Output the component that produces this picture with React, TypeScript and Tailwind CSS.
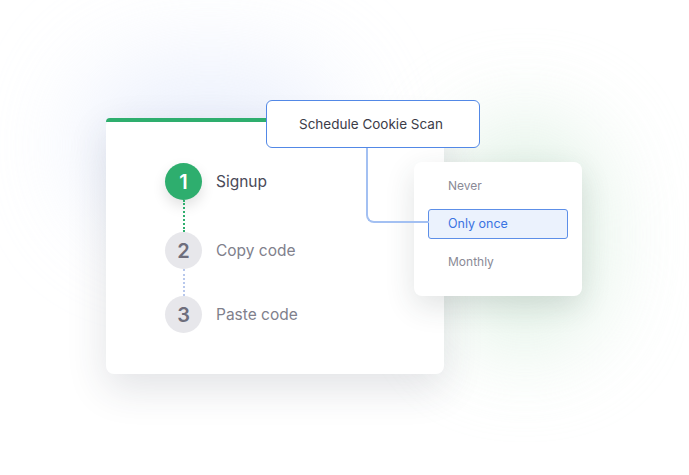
import React from "react";

const font = { fontFamily: "Inter, 'Noto Sans', sans-serif" };

function Step({ n, label, active }: { n: number; label: string; active?: boolean }) {
  return (
    <div className="flex items-center h-[37px]">
      <div
        className={
          active
            ? "w-[37px] h-[37px] rounded-full bg-[#2eae6e] text-white flex items-center justify-center text-[20px] font-semibold shadow-[0_6px_14px_rgba(0,0,0,0.12)]"
            : "w-[37px] h-[37px] rounded-full bg-[#e7e7eb] text-[#6e6e7c] flex items-center justify-center text-[20px] font-semibold"
        }
      >
        {n}
      </div>
      <span className={active ? "ml-[14px] text-[15.5px] text-[#4a4a58]" : "ml-[14px] text-[15.5px] text-[#80808c]"}>
        {label}
      </span>
    </div>
  );
}

export default function App() {
  return (
    <div className="relative w-[689px] h-[475px] overflow-hidden bg-white" style={font}>
      {/* soft background glows */}
      <div className="absolute left-[80px] top-[60px] w-[260px] h-[170px] rounded-full bg-[#dfe7fb] opacity-60 blur-[50px]" />
      <div className="absolute left-[450px] top-[120px] w-[150px] h-[230px] rounded-full bg-[#d9eedf] opacity-80 blur-[45px]" />

      {/* main card */}
      <div className="absolute left-[106px] top-[118px] w-[338px] h-[256px] bg-white rounded-lg rounded-tr-none shadow-[0_14px_40px_rgba(40,50,70,0.14)]">
        <div className="h-[4px] w-[170px] bg-[#2eae6e] rounded-tl-md" />
        <div className="pl-[59px] pt-[41px] flex flex-col">
          <Step n={1} label="Signup" active />
          <div className="ml-[18px] h-[32px] border-l-2 border-dotted border-[#2eae6e]" />
          <Step n={2} label="Copy code" />
          <div className="ml-[18px] h-[27px] border-l-2 border-dotted border-[#b8c8ec]" />
          <Step n={3} label="Paste code" />
        </div>
      </div>

      {/* dropdown */}
      <div className="absolute left-[414px] top-[162px] w-[168px] h-[134px] bg-white rounded-lg shadow-[0_10px_30px_rgba(40,60,60,0.14)] flex flex-col px-[14px] pt-[14px]">
        <div className="h-[20px] flex items-center pl-[20px] text-[12px] text-[#8a8a96]">Never</div>
        <div className="mt-[13px] h-[30px] flex items-center pl-[19px] text-[12.5px] text-[#3a74e2] bg-[#ebf2fd] border border-[#5d8fe8] rounded-[3px]">
          Only once
        </div>
        <div className="mt-[13px] h-[20px] flex items-center pl-[20px] text-[12px] text-[#8a8a96]">Monthly</div>
      </div>

      {/* connector */}
      <div className="absolute left-[366px] top-[147px] w-[63px] h-[76px] border-l-2 border-b-2 border-[#a3c0f2] rounded-bl-lg" />

      {/* schedule box */}
      <div className="absolute left-[266px] top-[100px] w-[214px] h-[48px] bg-white border border-[#5288e6] rounded-md flex items-center pl-[32px]">
        <span className="text-[13.5px] text-[#3c3c48]">Schedule Cookie Scan</span>
      </div>
    </div>
  );
}
